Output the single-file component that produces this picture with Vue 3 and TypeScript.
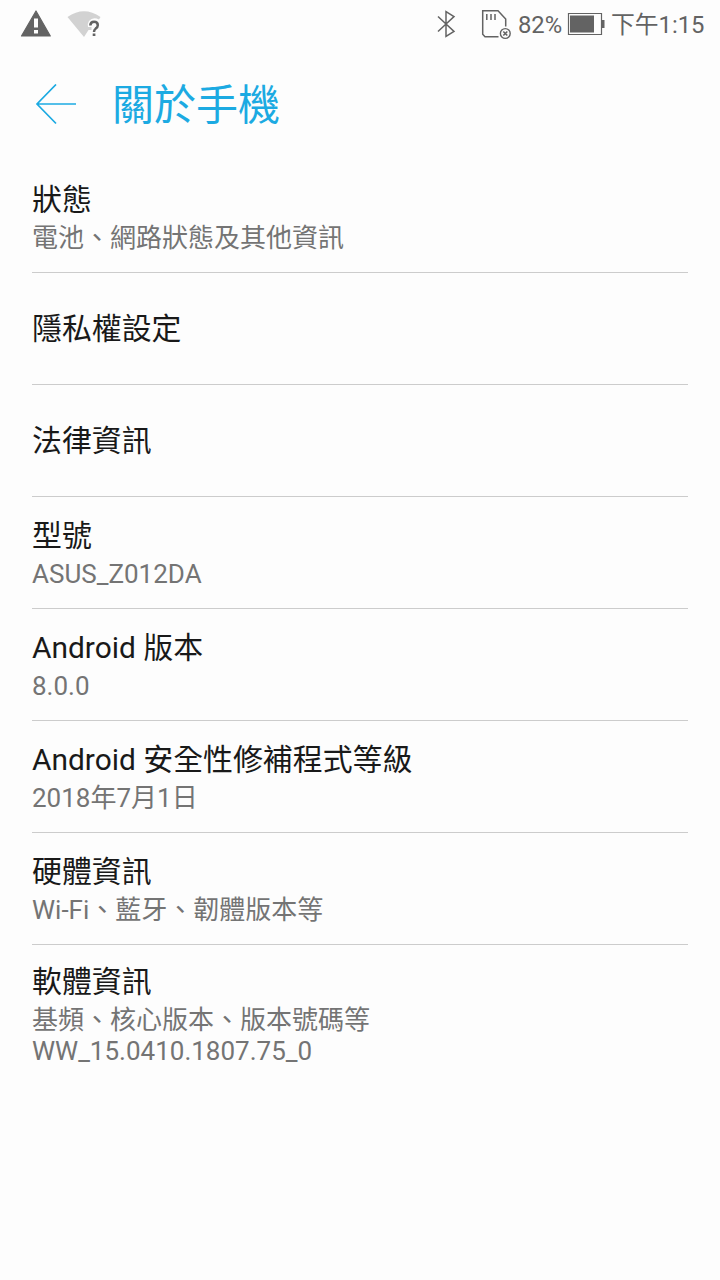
<script setup lang="ts">
interface Item { title: string; lines: string[] }
const items: Item[] = [
  { title: '狀態', lines: ['電池、網路狀態及其他資訊'] },
  { title: '隱私權設定', lines: [] },
  { title: '法律資訊', lines: [] },
  { title: '型號', lines: ['ASUS_Z012DA'] },
  { title: 'Android 版本', lines: ['8.0.0'] },
  { title: 'Android 安全性修補程式等級', lines: ['2018年7月1日'] },
  { title: '硬體資訊', lines: ['Wi-Fi、藍牙、韌體版本等'] },
  { title: '軟體資訊', lines: ['基頻、核心版本、版本號碼等', 'WW_15.0410.1807.75_0'] },
]
</script>

<template>
  <main class="screen">
    <header class="status">
      <svg class="left" width="110" height="48" viewBox="0 0 110 48">
        <path d="M36 11 L50.300 36 H21.500 Z" fill="#636363" stroke="#636363" stroke-width="1.200" stroke-linejoin="round" />
        <path d="M34 18.500h4v9h-4zM34 30h4v3.500h-4z" fill="#fdfdfd" />
        <path d="M67.500 17 Q84 5.500 100.500 17 L99 19.500 Q93 16.500 89 21 Q87 24 88 27 H91.500 V30 H88.500 L84 37 Z" fill="#d2d2d2" />
        <path d="M90.300 25.500 Q90.500 21.800 94 21.800 Q97.800 21.800 97.800 25.200 Q97.800 27 95.700 28.600 Q94 30 94 32" fill="none" stroke="#636363" stroke-width="2.500" />
        <path d="M92.700 33.500h2.700v2.500h-2.700z" fill="#636363" />
      </svg>
      <div class="right">
        <svg width="78" height="48" viewBox="434 0 78 48" fill="none" stroke="#636363">
          <path d="M438 16.500 L454 31.500 L446 36.500 V11.500 L454 16.500 L438 31.500" stroke-width="1.500" />
          <path d="M498.500 36.700 H485 L482.700 34.300 V10.700 H498 L505.700 19 V26.500" stroke-width="1.500" />
          <path d="M486.800 14v6M491 14v6M495 14v6" stroke-width="1.500" />
          <circle cx="505.300" cy="33.500" r="4.900" stroke-width="1.400" />
          <path d="M503.300 31.500l4 4M507.300 31.500l-4 4" stroke-width="1.600" />
        </svg>
        <span class="percent">82%</span>
        <svg class="battery" width="38" height="48" viewBox="567 0 38 48">
          <path d="M568.500 13.500h33v21h-33z" fill="none" stroke="#636363" stroke-width="1.200" />
          <path d="M570 15.500h24v17h-24zM602 20h2.500v8h-2.500z" fill="#636363" />
        </svg>
        <span class="time">下午1:15</span>
      </div>
    </header>
    <div class="heading">
      <svg width="42" height="42" viewBox="35 84 42 42"><path d="M56 84.500 L37 104 L56 123.500 M37 104 H76" fill="none" stroke="#1caae2" stroke-width="1.700" /></svg>
      <h1>關於手機</h1>
    </div>
    <section class="list">
      <article v-for="item in items" :key="item.title" class="item">
        <h2>{{ item.title }}</h2>
        <p v-for="line in item.lines" :key="line">{{ line }}</p>
      </article>
    </section>
  </main>
</template>

<style>
body { margin: 0; background: #fdfdfd; }
</style>
<style scoped>
.screen { width: 720px; height: 1280px; overflow: hidden; background: #fdfdfd; font-family: Roboto, "Noto Sans CJK TC", sans-serif; }
.status { height: 48px; display: flex; justify-content: space-between; color: #636363; }
.right { display: flex; width: 286px; font-size: 23.800px; line-height: 50px; white-space: nowrap; }
.percent { width: 49px; padding-left: 6px; }
.time { padding-left: 6px; }
.heading { height: 113px; display: flex; align-items: center; padding-left: 35px; color: #1caae2; }
h1 { margin: 3px 0 0 35px; font-size: 42px; line-height: 60px; font-weight: 400; }
.list { margin: 0 32px; }
.item { height: 112px; box-sizing: border-box; border-bottom: 1px solid #ccc; display: flex; flex-direction: column; justify-content: center; }
.item:last-child { height: 138px; border: 0; }
h2 { margin: 0; font-size: 29.900px; line-height: 40px; font-weight: 400; color: #191919; white-space: nowrap; }
p { margin: 0; font-size: 26px; line-height: 31px; color: #747474; white-space: nowrap; }
h2 + p { margin-top: 3px; }
p:last-child { margin-bottom: -1px; }
</style>
